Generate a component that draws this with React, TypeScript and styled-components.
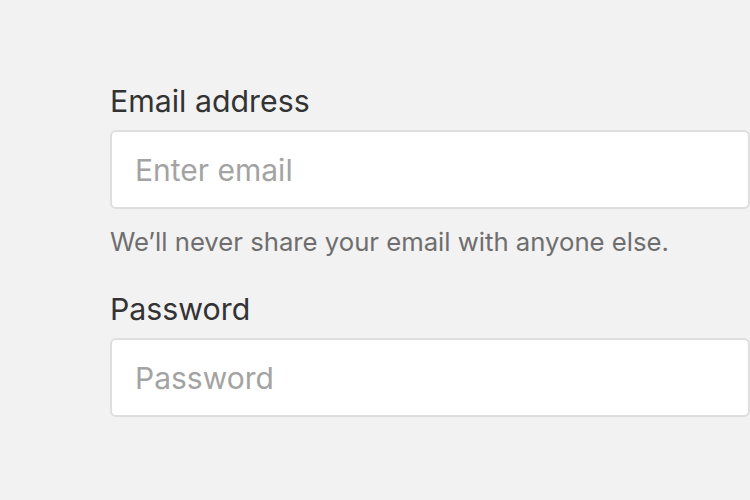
import React from "react";
import styled, { createGlobalStyle } from "styled-components";

const Global = createGlobalStyle`
  html, body { margin: 0; padding: 0; background: #f2f2f2; }
  body { font-family: Inter, "Noto Sans", sans-serif; }
`;

const Form = styled.form`
  display: flex;
  flex-direction: column;
  padding: 79px 0 0 110px;
  width: 640px;
`;

const Group = styled.div<{ $mb?: number }>`
  display: flex;
  flex-direction: column;
  margin-bottom: ${(p) => p.$mb ?? 0}px;
`;

const Label = styled.label`
  font-size: 30.3px;
  line-height: 45px;
  color: #333333;
  margin-bottom: 6px;
`;

const Input = styled.input`
  box-sizing: border-box;
  height: 79px;
  width: 100%;
  border: 2px solid #dedede;
  border-radius: 6px;
  background: #ffffff;
  padding: 0 23px;
  font-family: Inter, "Noto Sans", sans-serif;
  font-size: 30px;
  color: #333;
  outline: none;
  &::placeholder { color: #a3a3a3; }
`;

const Help = styled.div`
  margin-top: 13px;
  font-size: 25.7px;
  line-height: 39px;
  color: #6e6e6e;
`;

export default function App() {
  return (
    <>
      <Global />
      <Form>
        <Group $mb={26}>
          <Label>Email address</Label>
          <Input type="email" placeholder="Enter email" />
          <Help>We’ll never share your email with anyone else.</Help>
        </Group>
        <Group>
          <Label>Password</Label>
          <Input type="password" placeholder="Password" />
        </Group>
      </Form>
    </>
  );
}
